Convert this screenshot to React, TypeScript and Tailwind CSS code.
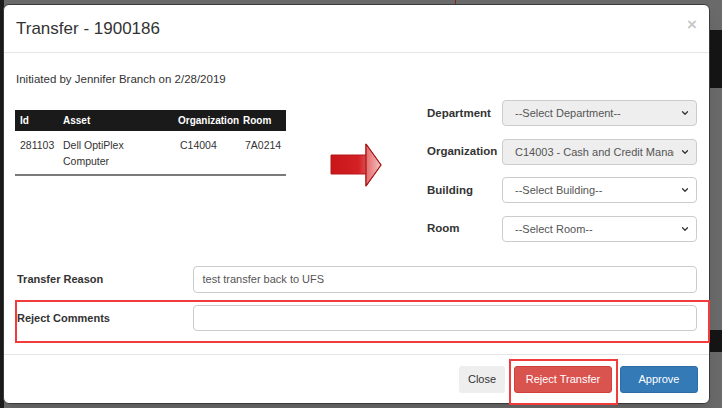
import React from 'react';
import { ChevronDown } from 'lucide-react';

const font = { fontFamily: '"Liberation Sans", Arial, sans-serif' };

function Select({ label, value, disabled }: { label: string; value: string; disabled?: boolean }) {
  return (
    <div className="flex items-center h-[26px]">
      <div className="w-[75px] shrink-0 text-[11.5px] font-bold text-[#333]">{label}</div>
      <div
        className={`flex-1 min-w-0 h-full flex items-center pl-[12px] pr-[6px] border border-[#ccc] rounded-[4px] text-[11px] text-[#555] ${
          disabled ? 'bg-[#eee]' : 'bg-white'
        }`}
      >
        <span className="flex-1 min-w-0 overflow-hidden whitespace-nowrap">{value}</span>
        <ChevronDown className="w-[10px] h-[10px] text-[#333] shrink-0 ml-[6px]" strokeWidth={3} />
      </div>
    </div>
  );
}

function Arrow() {
  return (
    <svg width="54" height="46" viewBox="0 0 54 46">
      <defs>
        <linearGradient id="shaft" x1="0" x2="1" y1="0" y2="0">
          <stop offset="0" stopColor="#c8161a" />
          <stop offset="0.55" stopColor="#d42024" />
          <stop offset="1" stopColor="#e8a0a0" />
        </linearGradient>
        <linearGradient id="head" x1="0" x2="1" y1="0" y2="0">
          <stop offset="0" stopColor="#e56a6a" />
          <stop offset="1" stopColor="#f3c4c4" />
        </linearGradient>
      </defs>
      <path d="M2 12 H37 V1 L52 22 L37 43 V31 H2 Z" fill="url(#shaft)" stroke="#b51a1a" strokeWidth="1" />
      <path d="M37 1 L52 22 L37 43 Z" fill="url(#head)" stroke="#a31515" strokeWidth="1.2" strokeLinejoin="round" />
    </svg>
  );
}

export default function App() {
  return (
    <div className="relative w-[722px] h-[408px] overflow-hidden bg-[#6a6a6a]" style={font}>
      {/* dimmed page behind the modal */}
      <div className="absolute left-0 top-0 w-[4px] h-full bg-[#1c1c1c]" />
      <div className="absolute right-0 top-[30px] w-[12px] h-[58px] bg-[#151515]" />
      <div className="absolute right-0 top-[330px] w-[12px] h-[22px] bg-[#151515]" />
      <div className="absolute left-[455px] top-0 w-[1px] h-[4px] bg-[#8a2020]" />

      <div className="relative pl-[3px] pt-[4px]">
        <div className="w-[707px] h-[400px] bg-white rounded-[6px] border border-[#3a3a3a] shadow-lg flex flex-col">
          {/* header */}
          <div className="h-[48px] border-b border-[#e5e5e5] flex items-center justify-between px-[12px]">
            <div className="text-[17px] text-[#333]">Transfer - 1900186</div>
            <div className="text-[17px] font-bold text-[#c8c8c8] leading-none -mt-[8px]">×</div>
          </div>

          {/* body */}
          <div className="flex-1 px-[12px] relative">
            <div className="text-[11.5px] text-[#333] mt-[18px]">Initiated by Jennifer Branch on 2/28/2019</div>

            <div className="flex mt-[12px]">
              <div className="w-[272px] pt-[10px] -ml-[1px]">
                <table className="w-full table-fixed text-[10.5px] border-collapse">
                  <thead>
                    <tr className="bg-[#1a1a1a] text-white h-[21px] text-[10px]">
                      <th className="text-left font-bold pl-[5px] w-[43px]">Id</th>
                      <th className="text-left font-bold pl-[5px] w-[115px]">Asset</th>
                      <th className="text-left font-bold pl-[5px] w-[65px]">Organization</th>
                      <th className="text-left font-bold pl-[5px]">Room</th>
                    </tr>
                  </thead>
                  <tbody className="text-[#333]">
                    <tr className="border-b-2 border-[#7a7a7a] align-top">
                      <td className="pl-[5px] pt-[6px] pb-[5px] leading-[16px]">281103</td>
                      <td className="pl-[5px] pt-[6px] pb-[5px] leading-[16px]">Dell OptiPlex<br />Computer</td>
                      <td className="pl-[7px] pt-[6px] pb-[5px] leading-[16px]">C14004</td>
                      <td className="pl-[7px] pt-[6px] pb-[5px] leading-[16px]">7A0214</td>
                    </tr>
                  </tbody>
                </table>
              </div>

              <div className="w-[142px] pl-[43px] pt-[43px]">
                <Arrow />
              </div>

              <div className="w-[270px] flex flex-col gap-[12.5px]">
                <Select label="Department" value="--Select Department--" disabled />
                <Select label="Organization" value="C14003 - Cash and Credit Management" disabled />
                <Select label="Building" value="--Select Building--" />
                <Select label="Room" value="--Select Room--" />
              </div>
            </div>

            <div className="flex items-center mt-[24px]">
              <div className="w-[178px] text-[11px] font-bold text-[#333] pl-[1px]">Transfer Reason</div>
              <div className="w-[505px] h-[27px] border border-[#ccc] rounded-[4px] flex items-center pl-[8px] text-[11px] text-[#555]">
                test transfer back to UFS
              </div>
            </div>

            <div className="flex items-center mt-[12px]">
              <div className="w-[178px] text-[11px] font-bold text-[#333] pl-[1px]">Reject Comments</div>
              <div className="w-[505px] h-[26px] border border-[#ccc] rounded-[4px]" />
            </div>

            {/* annotation box */}
            <div className="absolute left-[11px] top-[247px] w-[695px] h-[43px] border-2 border-[#f03c3c]" />
          </div>

          {/* footer */}
          <div className="h-[49px] border-t border-[#e5e5e5] flex items-start justify-end pr-[11px] pt-[11px] relative">
            <button className="h-[27px] w-[46px] bg-[#eeeeee] rounded-[3px] text-[11px] text-[#333]">Close</button>
            <button className="h-[27px] w-[98px] ml-[9px] bg-[#d9534f] border border-[#d43f3a] rounded-[3px] text-[11px] text-white">
              Reject Transfer
            </button>
            <button className="h-[27px] w-[78px] ml-[8px] bg-[#337ab7] border border-[#2e6da4] rounded-[3px] text-[11px] text-white">
              Approve
            </button>
            <div className="absolute left-[505px] top-[4px] w-[109px] h-[46px] border-2 border-[#f03c3c]" />
          </div>
        </div>
      </div>
    </div>
  );
}
